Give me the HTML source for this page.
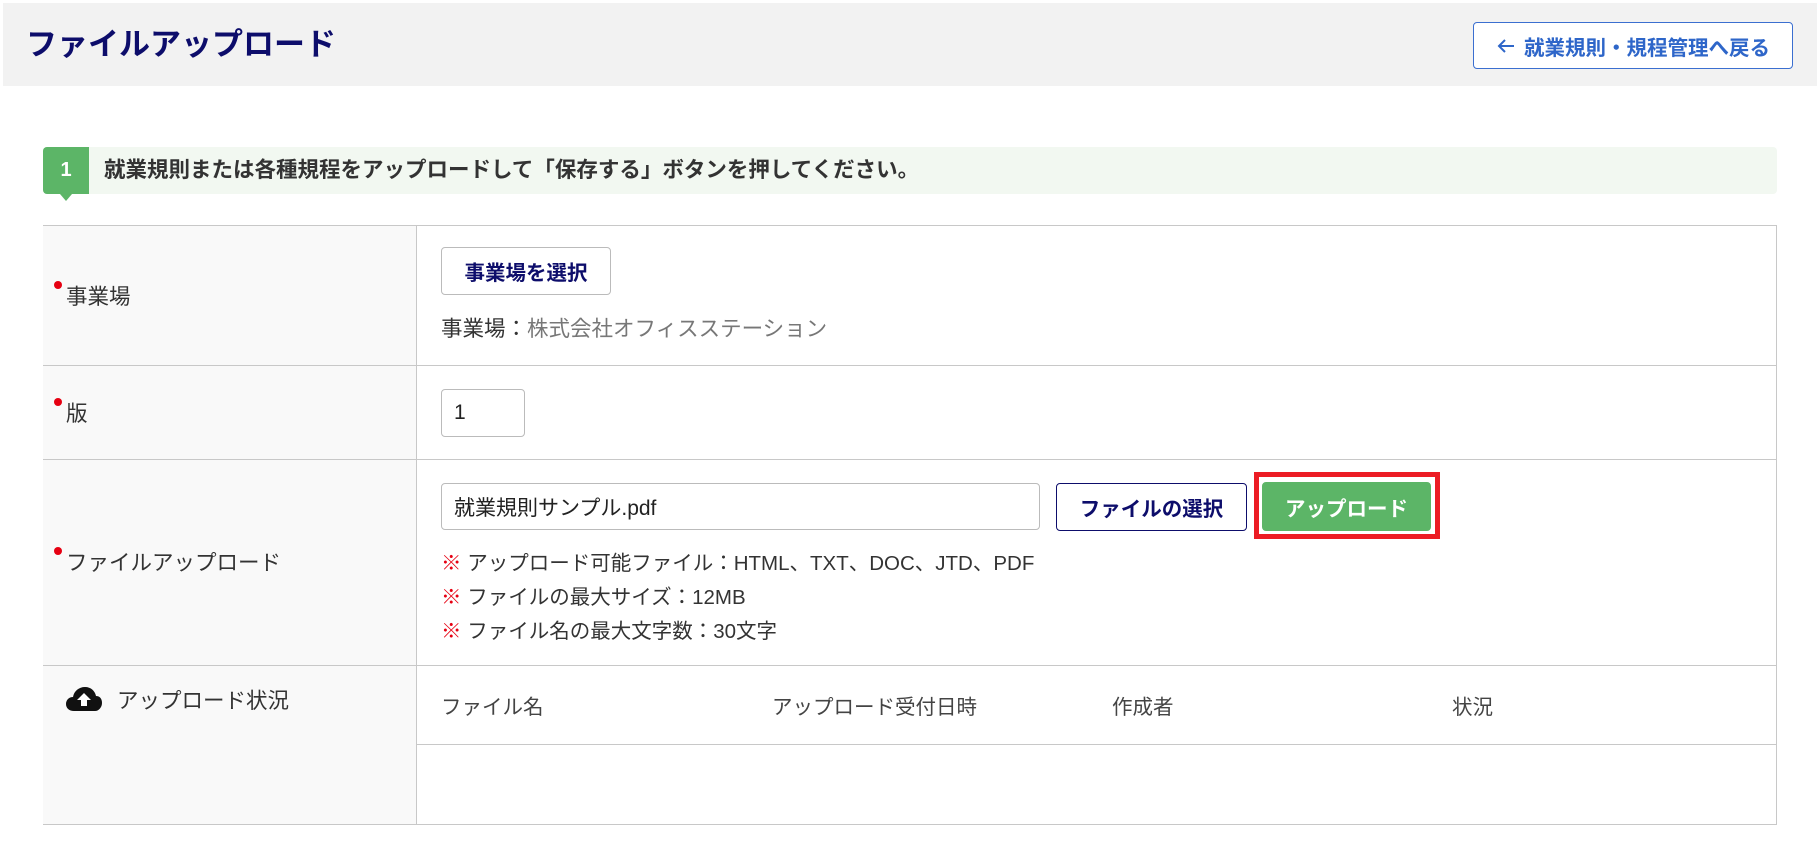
<!DOCTYPE html>
<html><head><meta charset="utf-8"><style>
*{margin:0;padding:0;box-sizing:border-box}
body{width:1820px;height:845px;background:#fff;font-family:"Liberation Sans","Noto Sans CJK JP",sans-serif;color:#333;position:relative;overflow:hidden}
.a{position:absolute}
.hdr{left:3px;top:3px;width:1814px;height:83px;background:#f2f2f2}
.title{left:26px;top:23px;font-size:31px;font-weight:bold;color:#0d0d6b;line-height:44px}
.back{left:1473px;top:22px;width:320px;height:47px;border:1px solid #3b6fd0;border-radius:4px;background:#fff;color:#2e66c9;font-weight:bold;font-size:20.5px;display:flex;align-items:center;justify-content:center;white-space:nowrap}
.step{left:43px;top:147px;width:1734px;height:47px;background:#f2f8f1;border-radius:4px}
.num{left:43px;top:147px;width:46px;height:47px;background:#5cb567;color:#fff;font-weight:bold;font-size:20px;display:flex;align-items:center;justify-content:center;border-radius:4px 0 0 4px}
.tri{left:60px;top:194px;width:0;height:0;border-left:6px solid transparent;border-right:6px solid transparent;border-top:7px solid #5cb567}
.steptxt{left:104px;top:147px;line-height:47px;font-size:21.5px;font-weight:bold;color:#333;white-space:nowrap}
.tbl{left:43px;top:225px;width:1734px;height:600px;border:1px solid #c8c8c8;border-bottom:none}
.lab{left:43px;width:374px;background:#f9f9f9;border-right:1px solid #c8c8c8}
.hl{height:1px;background:#c8c8c8}
.lt{font-size:21.5px;color:#333;white-space:nowrap}
.dot{width:8px;height:8px;border-radius:50%;background:#e60012}
.btn{border:1px solid #bbb;border-radius:4px;background:#fff;font-weight:bold;color:#0d0d6b;font-size:20.5px;display:flex;align-items:center;justify-content:center;white-space:nowrap}
.inp{border:1px solid #bbb;border-radius:4px;background:#fff;font-size:21px;color:#222;display:flex;align-items:center;padding-left:12px}
.note{font-size:20.5px;color:#333;white-space:nowrap}
.note b{color:#e60012;font-weight:bold}
.th{font-size:20.5px;color:#444;top:690px;white-space:nowrap}
</style></head><body>
<div class="a hdr"></div>
<div class="a title">ファイルアップロード</div>
<div class="a back"><svg width="20" height="18" viewBox="0 0 20 18" style="margin-right:8px"><path d="M18 9H3M9 3L3 9l6 6" fill="none" stroke="#2e66c9" stroke-width="2"/></svg>就業規則・規程管理へ戻る</div>

<div class="a step"></div>
<div class="a num">1</div>
<div class="a tri"></div>
<div class="a steptxt">就業規則または各種規程をアップロードして「保存する」ボタンを押してください。</div>

<div class="a tbl"></div>
<div class="a lab" style="top:226px;height:599px"></div>
<div class="a hl" style="left:43px;top:365px;width:1734px"></div>
<div class="a hl" style="left:43px;top:459px;width:1734px"></div>
<div class="a hl" style="left:43px;top:665px;width:1734px"></div>
<div class="a hl" style="left:417px;top:744px;width:1360px"></div>
<div class="a hl" style="left:43px;top:824px;width:1734px"></div>
<div class="a" style="left:1776px;top:225px;width:1px;height:600px;background:#c8c8c8"></div>

<div class="a dot" style="left:54px;top:281px"></div>
<div class="a lt" style="left:66px;top:280px">事業場</div>
<div class="a dot" style="left:54px;top:398px"></div>
<div class="a lt" style="left:66px;top:397px">版</div>
<div class="a dot" style="left:54px;top:547px"></div>
<div class="a lt" style="left:66px;top:546px">ファイルアップロード</div>
<svg class="a" style="left:65px;top:686px" width="38" height="26" viewBox="0 0 38 26"><path d="M9 25C4 25 1 22 1 18c0-4 3-7 7-7C9 5 14 1 20 1c6 0 10 4 11 9c4 0 6 3 6 7c0 4-3 8-7 8z" fill="#111"/><path d="M19 7l-7 7h4v6h6v-6h4z" fill="#fff"/></svg>
<div class="a lt" style="left:117px;top:684px">アップロード状況</div>

<div class="a btn" style="left:441px;top:247px;width:170px;height:48px">事業場を選択</div>
<div class="a" style="left:441px;top:312px;font-size:21.5px;color:#333;white-space:nowrap">事業場：<span style="color:#777">株式会社オフィスステーション</span></div>

<div class="a inp" style="left:441px;top:389px;width:84px;height:48px">1</div>

<div class="a inp" style="left:441px;top:483px;width:599px;height:47px">就業規則サンプル.pdf</div>
<div class="a btn" style="left:1056px;top:483px;width:191px;height:48px;border-color:#0d0d6b">ファイルの選択</div>
<div class="a" style="left:1254px;top:472px;width:186px;height:67px;background:#ec1c24"></div>
<div class="a" style="left:1259px;top:477px;width:176px;height:57px;background:#fff"></div>
<div class="a btn" style="left:1262px;top:482px;width:169px;height:49px;background:#5cb567;border-color:#5cb567;color:#fff">アップロード</div>

<div class="a note" style="left:441px;top:546px"><b>※</b> アップロード可能ファイル：HTML、TXT、DOC、JTD、PDF</div>
<div class="a note" style="left:441px;top:580px"><b>※</b> ファイルの最大サイズ：12MB</div>
<div class="a note" style="left:441px;top:614px"><b>※</b> ファイル名の最大文字数：30文字</div>

<div class="a th" style="left:441px">ファイル名</div>
<div class="a th" style="left:772px">アップロード受付日時</div>
<div class="a th" style="left:1112px">作成者</div>
<div class="a th" style="left:1452px">状況</div>
</body></html>
